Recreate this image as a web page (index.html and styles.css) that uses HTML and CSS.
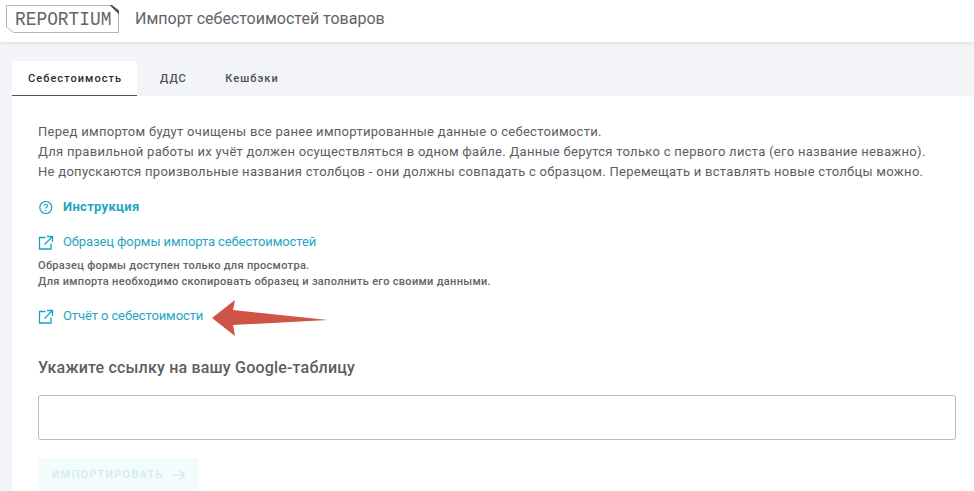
FILE: index.html
```html
<!DOCTYPE html>
<html lang="ru">
<head>
<meta charset="utf-8">
<title>Импорт себестоимостей товаров</title>
<link rel="stylesheet" href="styles.css">
</head>
<body>
<header class="topbar">
  <div class="logo">
    <svg class="logo-frame" width="113" height="28" viewBox="0 0 113 28" aria-hidden="true"><path d="M0.5 0.5H104.500L112.500 7V27.500H7.500L0.500 22Z" fill="none" stroke="#b4b7ba" stroke-width="1"/><path d="M103.500 0H106L113 5.500V9.500Z" fill="#4a5058"/></svg>
    <span class="logo-text">REPORTIUM</span>
  </div>
  <h1 class="page-title">Импорт себестоимостей товаров</h1>
</header>
<nav class="tabs">
  <a class="tab tab-active">Себестоимость</a>
  <a class="tab">ДДС</a>
  <a class="tab">Кешбэки</a>
</nav>
<main class="panel">
  <div class="intro">
    <p>Перед импортом будут очищены все ранее импортированные данные о себестоимости.</p>
    <p>Для правильной работы их учёт должен осуществляться в одном файле. Данные берутся только с первого листа (его название неважно).</p>
    <p>Не допускаются произвольные названия столбцов - они должны совпадать с образцом. Перемещать и вставлять новые столбцы можно.</p>
  </div>
  <a class="link link-strong">
    <svg class="icon" viewBox="0 0 16 16" aria-hidden="true"><circle cx="7.800" cy="8.500" r="6" fill="none" stroke="#17a2c0" stroke-width="1.2"/><path d="M6 6.900C6.100 5.800 6.800 5.300 7.800 5.300C8.900 5.300 9.600 5.900 9.600 6.800C9.600 8 7.800 8.100 7.800 9.600" fill="none" stroke="#17a2c0" stroke-width="1.1"/><circle cx="7.800" cy="11.500" r=".7" fill="#17a2c0"/></svg>
    Инструкция
  </a>
  <a class="link link-form">
    <svg class="icon" viewBox="0 0 16 16" aria-hidden="true"><path d="M7.500 3.500H1.500V15H13V9.500M9 2.500H14.500V8M14.500 2.500L6.500 10.500" fill="none" stroke="#17a2c0" stroke-width="1.300"/></svg>
    Образец формы импорта себестоимостей
  </a>
  <div class="note">
    <p>Образец формы доступен только для просмотра.</p>
    <p>Для импорта необходимо скопировать образец и заполнить его своими данными.</p>
  </div>
  <div class="report-row">
    <a class="link link-report">
      <svg class="icon" viewBox="0 0 16 16" aria-hidden="true"><path d="M7.500 3.500H1.500V15H13V9.500M9 2.500H14.500V8M14.500 2.500L6.500 10.500" fill="none" stroke="#17a2c0" stroke-width="1.300"/></svg>
      Отчёт о себестоимости
    </a>
    <svg class="arrow" width="116" height="36" viewBox="0 0 116 36" aria-hidden="true"><path d="M0 18L23 0L21 10L116 20L21 25L23 36Z" fill="#d05445"/></svg>
  </div>
  <h2 class="form-title">Укажите ссылку на вашу Google-таблицу</h2>
  <input class="url-input" type="text" aria-label="Ссылка на Google-таблицу">
  <button class="submit" type="button" disabled>ИМПОРТИРОВАТЬ
    <svg width="12" height="10" viewBox="0 0 12 10" aria-hidden="true"><path d="M0 5H11.500M7 .5L11.500 5L7 9.500" fill="none" stroke="#c6e9f1" stroke-width="1.100"/></svg>
  </button>
</main>
</body>
</html>
```
FILE: styles.css
```css
* { box-sizing: border-box; }
html, body { height: 100%; }
body {
  margin: 0;
  height: 491px;
  overflow: hidden;
  background: #f3f4f8;
  font-family: Roboto, "Noto Sans", sans-serif;
  color: #555a60;
  display: flex;
  flex-direction: column;
}
p { margin: 0; }
.topbar {
  height: 42px;
  flex: none;
  background: #fff;
  display: flex;
  align-items: flex-start;
  box-shadow: 0 1px 4px rgba(60, 64, 80, .12);
  padding: 5px 0 0 6px;
}
.logo { position: relative; width: 113px; height: 28px; flex: none; }
.logo-frame { position: absolute; left: 0; top: 0; }
.logo-text {
  position: absolute;
  left: 8.500px;
  top: 4px;
  font-family: "Liberation Mono", monospace;
  font-size: 21px;
  line-height: 22px;
  color: #60656a;
  transform: scaleX(.85);
  transform-origin: left;
}
.page-title {
  margin: 2px 0 0 16px;
  font-size: 16px;
  line-height: 24px;
  font-weight: 400;
  color: #5f6368;
}
.tabs {
  margin: 19px 0 0 12px;
  display: flex;
  height: 35px;
  flex: none;
}
.tab {
  font-size: 11px;
  font-weight: 500;
  letter-spacing: 1.05px;
  line-height: 35px;
  padding: 0 15.500px 0 23px;
  color: #4a4f55;
}
.tab-active {
  background: #fff;
  color: #2b2f36;
  border-bottom: 1px solid #4a5568;
  width: 125px;
  padding: 0 0 0 16px;
}
.panel {
  flex: 1;
  margin-left: 12px;
  background: #fff;
  padding: 26px 18px 0 26px;
  display: flex;
  flex-direction: column;
  align-items: flex-start;
}
.intro { font-size: 13px; line-height: 20px; letter-spacing: .29px; color: #5a5e63; }
.link {
  display: flex;
  align-items: center;
  gap: 9px;
  font-size: 13px;
  line-height: 20px;
  letter-spacing: -.1px;
  color: #1fa6c3;
}
.link-strong { font-weight: 700; margin-top: 15px; letter-spacing: .3px; }
.link-form { margin-top: 15px; }
.link-report { margin-bottom: 4px; }
.icon { width: 16px; height: 16px; flex: none; }
.note {
  margin-top: 6px;
  font-size: 11px;
  font-weight: 500;
  line-height: 16px;
  letter-spacing: .31px;
  color: #5f6367;
}
.report-row { margin-top: 10px; display: flex; align-items: center; gap: 9px; height: 36px; }
.arrow { flex: none; }
.form-title {
  margin: 20px 0 0;
  font-size: 16px;
  line-height: 24px;
  font-weight: 500;
  letter-spacing: .19px;
  color: #5a5e63;
}
.url-input {
  display: block;
  width: 918px;
  height: 45px;
  margin-top: 15px;
  border: 1px solid #b9b9b9;
  border-radius: 3px;
  background: #fff;
}
.submit {
  margin-top: 18px;
  width: 161px;
  height: 33px;
  flex: none;
  border: 0;
  border-radius: 3px;
  background: #f3fbfd;
  color: #cdecf3;
  font-family: inherit;
  font-size: 11px;
  font-weight: 500;
  letter-spacing: 1.2px;
  display: flex;
  align-items: center;
  justify-content: center;
  gap: 10px;
}
```
